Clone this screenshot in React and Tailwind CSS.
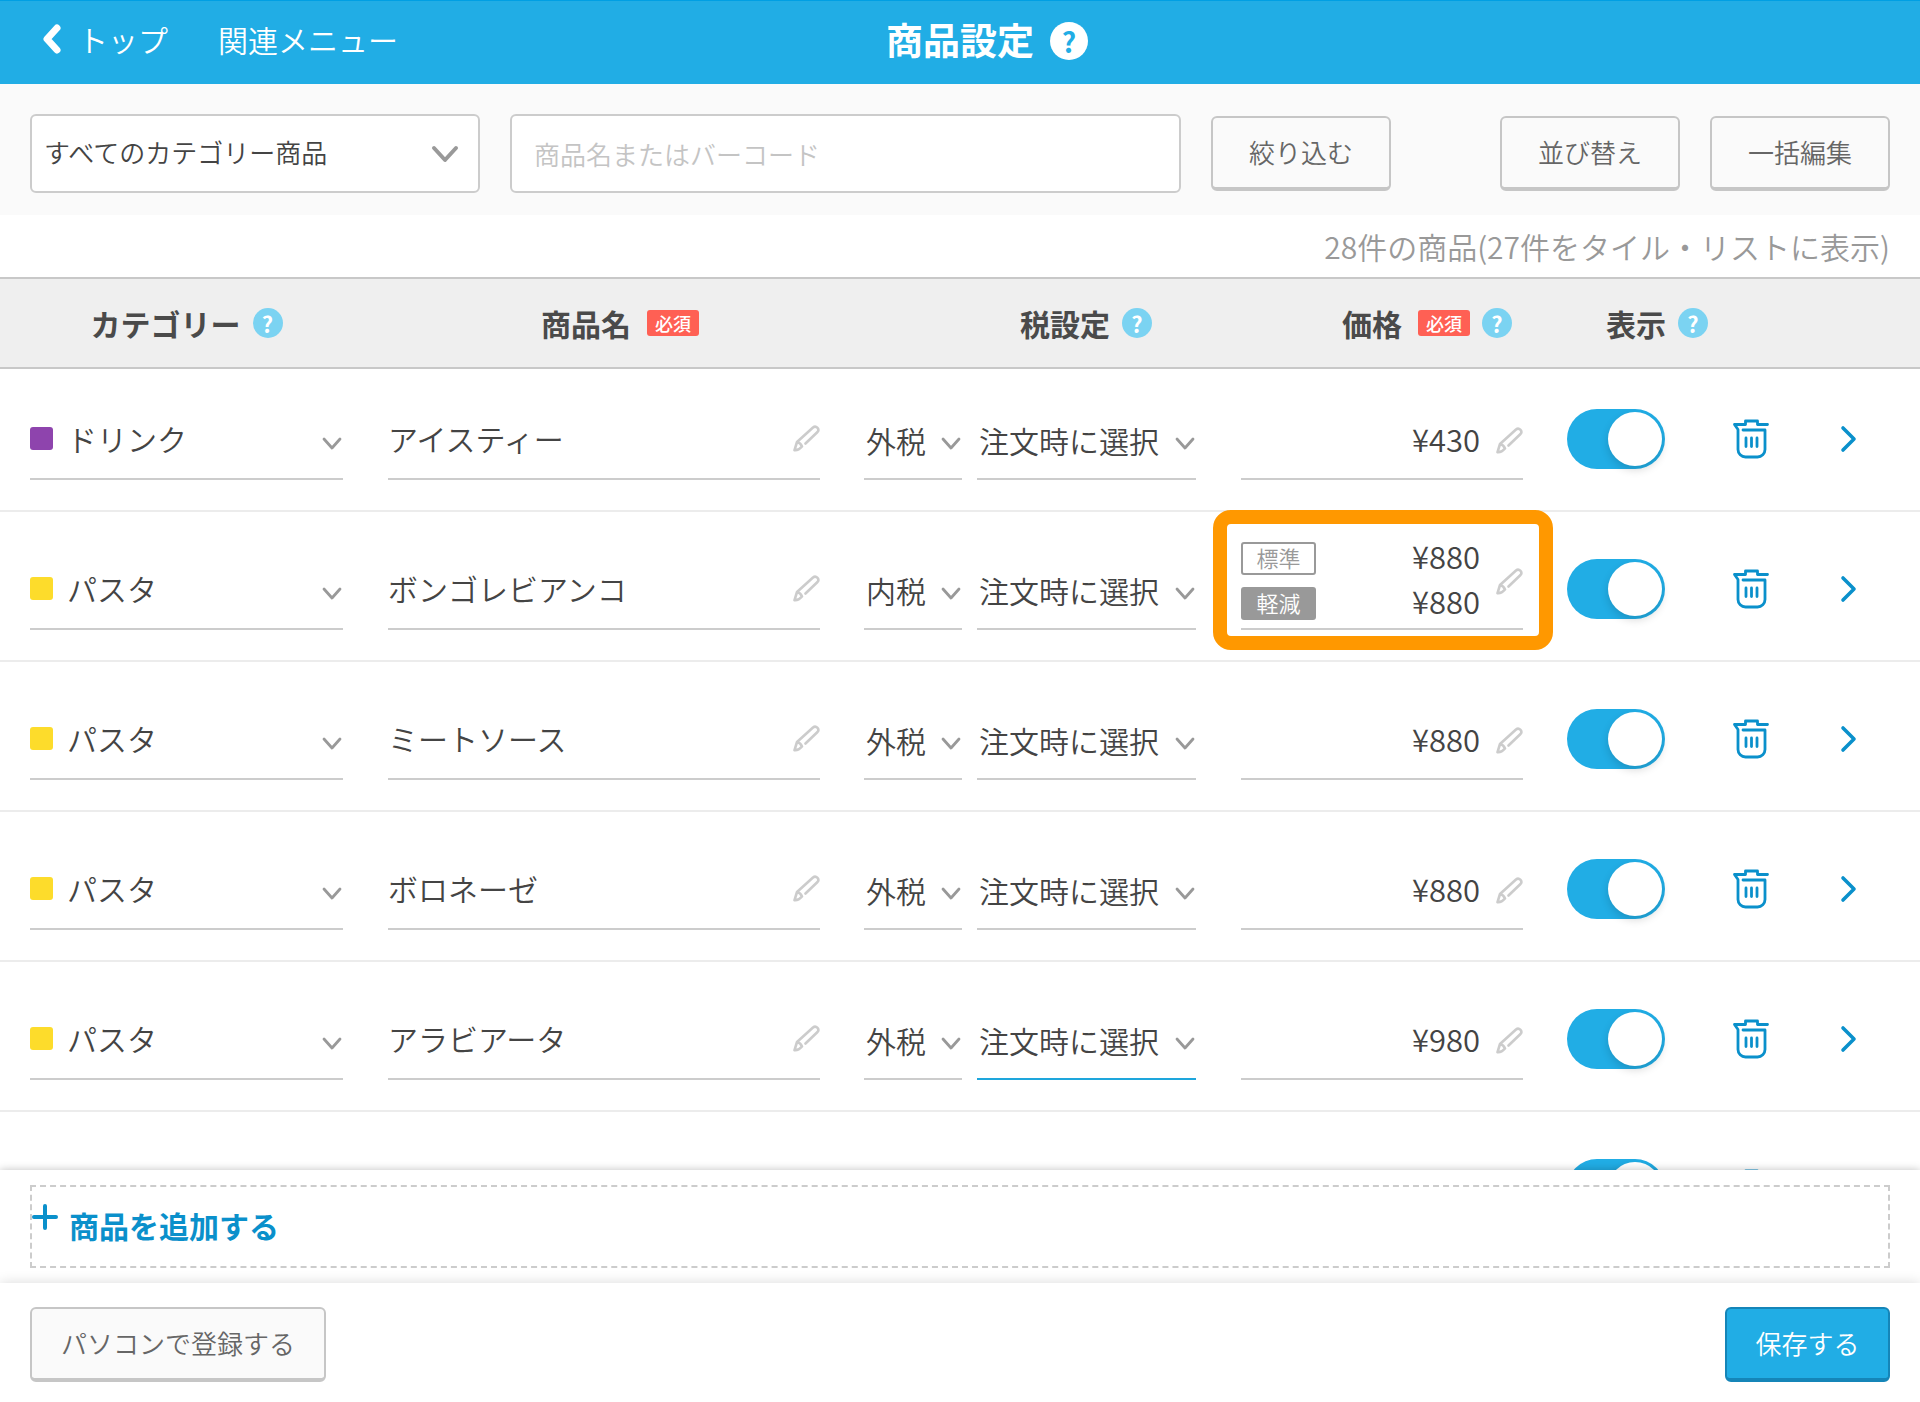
import React, { useState } from 'react';

const INITIAL_ITEMS = [
  { id: 1, category: 'ドリンク', color: 'bg-[#8e44ad]', name: 'アイスティー', tax: '外税', prices: ['¥430'] },
  { id: 2, category: 'パスタ', color: 'bg-[#fddc2b]', name: 'ボンゴレビアンコ', tax: '内税', prices: ['¥880', '¥880'] },
  { id: 3, category: 'パスタ', color: 'bg-[#fddc2b]', name: 'ミートソース', tax: '外税', prices: ['¥880'] },
  { id: 4, category: 'パスタ', color: 'bg-[#fddc2b]', name: 'ボロネーゼ', tax: '外税', prices: ['¥880'] },
  { id: 5, category: 'パスタ', color: 'bg-[#fddc2b]', name: 'アラビアータ', tax: '外税', prices: ['¥980'], active: true },
  { id: 6, category: 'パスタ', color: 'bg-[#fddc2b]', name: 'カルボナーラ', tax: '外税', prices: ['¥980'] },
];

function ChevronDown({ className }) {
  return (
    <svg viewBox="0 0 20 13" className={className} fill="none" stroke="currentColor" strokeWidth="2.8" strokeLinecap="round" strokeLinejoin="round">
      <path d="M2 2l8 9 8-9" />
    </svg>
  );
}

function Pencil() {
  return (
    <svg viewBox="0 0 27 27" className="w-[27px] h-[27px] shrink-0 text-[#ccc]" fill="none" stroke="currentColor" strokeWidth="2.6" strokeLinecap="round" strokeLinejoin="round">
      <path d="M12.5 18.5L24.5 7C27 4 23 0 20 2.5L4 17L1.500 25.200C5 25.500 6.500 24.500 9 21.500C8 19 6.500 17.500 4 17" />
    </svg>
  );
}

function TrashIcon() {
  return (
    <svg viewBox="0 0 36 40" className="w-9 h-10" fill="none" stroke="currentColor" strokeWidth="2.8" strokeLinecap="round" strokeLinejoin="round">
      <path d="M34.5 5.5h-10V2h-12v3.500H1.500L5 10.500v20a7.500 7.500 0 0 0 7.500 7.500h12a7.500 7.500 0 0 0 7.500-7.500V11H10" />
      <path d="M13 19v8.500M18.500 19v8.500M24 19v8.500" />
    </svg>
  );
}

function Help({ label }) {
  return (
    <button type="button" aria-label={label} className="flex w-[30px] h-[30px] shrink-0 items-center justify-center rounded-full bg-[#7bd3f2] text-[22px] leading-none font-bold text-white">
      ?
    </button>
  );
}

function Required() {
  return <span className="flex h-[26px] items-center rounded-[3px] bg-[#ff6054] px-2 text-lg leading-none font-medium text-white">必須</span>;
}

function LineSelect({ label, options, className, active }) {
  return (
    <div className={`relative border-b-2 ${active ? 'border-[#1ea6dc]' : 'border-[#ccc]'} ${className}`}>
      <select aria-label={label} className="h-[74px] w-full appearance-none bg-transparent px-[2px] pb-[2px] leading-[44px] outline-none">
        {options.map((o) => <option key={o}>{o}</option>)}
      </select>
      <ChevronDown className="pointer-events-none absolute right-[1px] bottom-7 w-5 text-[#999]" />
    </div>
  );
}

function PriceField({ item }) {
  if (item.prices.length === 1) {
    return (
      <div className="flex h-[76px] items-center gap-4 border-b-2 border-[#ccc] pb-[2px]">
        <input aria-label={`${item.name} 価格`} defaultValue={item.prices[0]} className="h-full min-w-0 flex-1 pb-1 text-right text-[31px] outline-none" />
        <Pencil />
      </div>
    );
  }

  // Items with both tax rates show one price per rate
  return (
    <div className="relative flex items-center gap-4 border-b-2 border-[#ccc] pb-2">
      <div className="flex min-w-0 flex-1 flex-col gap-3">
        <label className="flex h-[33px] items-center justify-between">
          <span className="flex h-full w-[75px] shrink-0 items-center justify-center rounded-[3px] border-2 border-[#999] pb-1 text-[22px] leading-none text-[#999]">標準</span>
          <input defaultValue={item.prices[0]} className="h-[38px] w-0 flex-1 pb-[6px] text-right text-[31px] outline-none" />
        </label>
        <label className="flex h-[33px] items-center justify-between">
          <span className="flex h-full w-[75px] shrink-0 items-center justify-center rounded-[3px] bg-[#999] pb-1 text-[22px] leading-none text-white">軽減</span>
          <input defaultValue={item.prices[1]} className="h-[38px] w-0 flex-1 pb-[6px] text-right text-[31px] outline-none" />
        </label>
      </div>
      <Pencil />
      <div className="pointer-events-none absolute -top-8 -right-[30px] -bottom-[22px] -left-7 z-10 rounded-[18px] border-[14px] border-[#ff9800]"></div>
    </div>
  );
}

function ItemRow({ item, shown, onToggle }) {
  return (
    <tr className="h-[150px] border-b-2 border-[#ececec] align-bottom first:h-[143px]">
      <td className="pr-[22px] pb-[30px] pl-[30px]">
        <div className="flex h-[76px] items-center border-b-2 border-[#ccc] pb-[6px]">
          <span className={`h-[23px] w-[23px] shrink-0 rounded-[3px] ${item.color}`}></span>
          <div className="relative min-w-0 flex-1">
            <select aria-label="カテゴリー" defaultValue={item.category} className="h-[68px] w-full appearance-none bg-transparent pl-[14px] leading-[44px] outline-none">
              <option>ドリンク</option>
              <option>パスタ</option>
            </select>
            <ChevronDown className="pointer-events-none absolute right-[1px] bottom-[22px] w-5 text-[#999]" />
          </div>
        </div>
      </td>
      <td className="pr-[22px] pb-[30px] pl-[23px]">
        <div className="flex h-[76px] items-center border-b-2 border-[#ccc] pb-[6px]">
          <input aria-label="商品名" defaultValue={item.name} className="h-full min-w-0 flex-1 outline-none" />
          <Pencil />
        </div>
      </td>
      <td className="px-[22px] pb-[30px]">
        <div className="flex gap-[15px]">
          <LineSelect label="税区分" options={item.tax === '外税' ? ['外税', '内税'] : ['内税', '外税']} className="w-[98px]" />
          <LineSelect label="税率" options={['注文時に選択']} active={item.active} className="flex-1" />
        </div>
      </td>
      <td className="pr-[22px] pb-[30px] pl-[23px]">
        <PriceField item={item} />
      </td>
      <td className="pb-[30px] pl-[22px]">
        <div className="flex h-[76px] pt-[5px]">
          <input
            type="checkbox"
            role="switch"
            aria-label={`${item.name} 表示`}
            checked={shown}
            onChange={onToggle}
            className="flex h-[60px] w-[98px] cursor-pointer appearance-none items-center rounded-full bg-gray-300 px-[3px] transition-colors before:h-[54px] before:w-[54px] before:rounded-full before:bg-white before:shadow-[0_4px_8px_rgba(0,0,0,0.15)] checked:justify-end checked:bg-[#21ade5]"
          />
        </div>
      </td>
      <td className="pb-[30px] text-center">
        <div className="flex h-[76px] justify-center pt-[15px] pl-4">
          <button type="button" aria-label="削除" className="h-10 text-[#0a90cb]"><TrashIcon /></button>
        </div>
      </td>
      <td className="pb-[30px]">
        <div className="flex h-[76px] pt-[21px] pl-10">
          <a href="#detail" aria-label="詳細" className="h-7 text-[#0a90cb]">
            <svg viewBox="0 0 18 28" className="h-7 w-[18px]" fill="none" stroke="currentColor" strokeWidth="3.6" strokeLinecap="round" strokeLinejoin="round">
              <path d="M4 3l11 11L4 25" />
            </svg>
          </a>
        </div>
      </td>
    </tr>
  );
}

const grayButton = 'h-[75px] rounded-md border-2 border-b-4 border-[#c6c6c6] bg-[#fafafa] text-[26px] leading-none text-[#666]';

export default function App() {
  const [hidden, setHidden] = useState([]);

  const toggle = (id) => {
    setHidden(hidden.includes(id) ? hidden.filter((h) => h !== id) : [...hidden, id]);
  };

  return (
    <div className="flex h-screen flex-col overflow-hidden bg-white font-['Noto_Sans_CJK_JP',sans-serif] text-[30px] leading-none font-[350] text-[#444]">
      {/* Header */}
      <header className="grid h-[84px] shrink-0 grid-cols-[1fr_auto_1fr] items-center border-t border-[#009fe3] bg-[#21ade5] pb-1 text-white">
        <nav className="flex items-center gap-[50px] pb-1 pl-10">
          <a href="#top" className="flex items-center gap-4">
            <svg viewBox="0 0 22 32" className="h-8 w-[22px]" fill="none" stroke="currentColor" strokeWidth="7" strokeLinecap="round" strokeLinejoin="round">
              <path d="M17 5L7 16l10 11" />
            </svg>
            トップ
          </a>
          <a href="#menu">関連メニュー</a>
        </nav>
        <h1 className="pb-[2px] text-[37px] leading-none font-bold">商品設定</h1>
        <button type="button" aria-label="ヘルプ" className="ml-4 flex h-[38px] w-[38px] items-center justify-center rounded-full bg-white text-[28px] leading-none font-bold text-[#21ade5]">
          ?
        </button>
      </header>

      {/* Filter */}
      <div className="flex h-[131px] shrink-0 items-center bg-[#fafafa] px-[30px] pt-2">
        <div className="relative h-[79px] w-[450px]">
          <select aria-label="カテゴリーで絞り込む" className="h-full w-full appearance-none rounded-md border-2 border-[#ccc] bg-white px-3 pb-1 text-[26px] leading-10 outline-none">
            <option>すべてのカテゴリー商品</option>
          </select>
          <svg viewBox="0 0 28 18" className="pointer-events-none absolute top-[31px] right-[21px] w-7 text-[#999]" fill="none" stroke="currentColor" strokeWidth="4" strokeLinecap="round" strokeLinejoin="round">
            <path d="M3 3l11 12L25 3" />
          </svg>
        </div>
        <input type="text" aria-label="商品名またはバーコード" placeholder="商品名またはバーコード" className="ml-[30px] h-[79px] min-w-0 flex-1 rounded-md border-2 border-[#ccc] bg-white px-[22px] text-[26px] outline-none placeholder:text-[#c4c4c4]" />
        <button type="button" className={`${grayButton} ml-[30px] w-[180px] pb-[2px]`}>絞り込む</button>
        <button type="button" className={`${grayButton} ml-[109px] w-[180px] pb-[2px]`}>並び替え</button>
        <button type="button" className={`${grayButton} ml-[30px] w-[180px] pb-[2px]`}>一括編集</button>
      </div>

      <p className="flex h-[62px] shrink-0 items-center justify-end px-[30px] text-[#999]">28件の商品(27件をタイル・リストに表示)</p>

      {/* Item list */}
      <main className="min-h-0 flex-1 overflow-hidden">
        <table className="w-full table-fixed border-collapse">
          <colgroup>
            <col className="w-[365px]" />
            <col />
            <col className="w-[376px]" />
            <col className="w-[327px]" />
            <col className="w-[142px]" />
            <col className="w-[112px]" />
            <col className="w-[121px]" />
          </colgroup>
          <thead>
            <tr className="h-[90px] border-y-2 border-[#c8c8c8] bg-[#efefef] text-[#4a4a4a]">
              <th className="pr-[22px] pl-[30px] font-bold">
                <div className="flex items-center justify-center gap-3">カテゴリー<Help label="カテゴリーのヘルプ" /></div>
              </th>
              <th className="pr-[22px] pl-[55px] font-bold">
                <div className="flex items-center justify-center gap-4">商品名<Required /></div>
              </th>
              <th className="pr-[22px] pl-[134px] font-bold">
                <div className="flex items-center justify-center gap-3">税設定<Help label="税設定のヘルプ" /></div>
              </th>
              <th className="pr-[22px] pl-[113px] font-bold">
                <div className="flex items-center justify-center gap-3">
                  <span className="mr-1 whitespace-nowrap">価格</span>
                  <Required />
                  <Help label="価格のヘルプ" />
                </div>
              </th>
              <th colSpan={3} className="pl-[61px] font-bold">
                <div className="flex items-center gap-3">表示<Help label="表示のヘルプ" /></div>
              </th>
            </tr>
          </thead>
          <tbody>
            {INITIAL_ITEMS.map((item) => (
              <ItemRow key={item.id} item={item} shown={!hidden.includes(item.id)} onToggle={() => toggle(item.id)} />
            ))}
          </tbody>
        </table>
      </main>

      {/* Add item */}
      <div className="relative z-20 shrink-0 bg-white px-[30px] py-[15px] shadow-[0_0_8px_rgba(0,0,0,0.25)]">
        <button type="button" className="flex h-[83px] w-full items-start border-2 border-dashed border-[#ccc] pt-[17px] font-bold text-[#0a90cb]">
          <svg viewBox="0 0 26 26" className="h-[26px] w-[26px]" fill="none" stroke="currentColor" strokeWidth="4" strokeLinecap="round">
            <path d="M13 2v22M2 13h22" />
          </svg>
          <span className="pt-[6px] pl-[11px]">商品を追加する</span>
        </button>
      </div>

      {/* Footer */}
      <footer className="relative z-20 flex shrink-0 justify-between bg-white px-[30px] pt-6 pb-5 shadow-[0_0_12px_rgba(0,0,0,0.15)]">
        <button type="button" className={`${grayButton} px-[29px] pb-[2px]`}>パソコンで登録する</button>
        <button type="button" className="h-[75px] w-[165px] rounded-md border-2 border-b-4 border-[#1585b8] bg-[#21ade5] pb-[2px] text-[26px] leading-none text-white">保存する</button>
      </footer>
    </div>
  );
}
